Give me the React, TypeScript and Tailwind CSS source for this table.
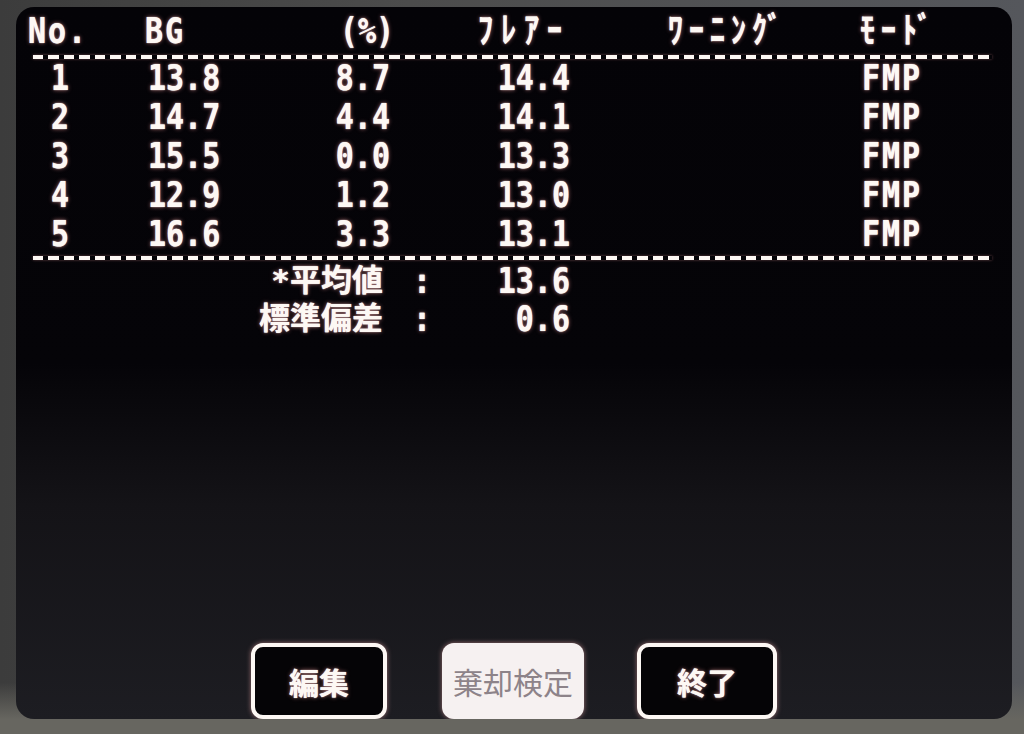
import React from "react";

const lcd =
  "inline-block scale-y-[1.2] font-['DejaVu_Sans_Mono','Noto_Sans_CJK_JP',monospace] text-[30px] font-bold leading-none text-[#fdf8f4] [text-shadow:0_0_1px_#fff,0_0_4px_rgba(255,160,160,0.6)]";
const cjk =
  "inline-block font-['DejaVu_Sans_Mono','Noto_Sans_CJK_JP',sans-serif] text-[31px] font-bold leading-none text-[#fdf8f4] [text-shadow:0_0_1px_#fff,0_0_4px_rgba(255,160,160,0.6)]";

const rows: [string, string, string, string, string][] = [
  ["1", "13.8", "8.7", "14.4", "FMP"],
  ["2", "14.7", "4.4", "14.1", "FMP"],
  ["3", "15.5", "0.0", "13.3", "FMP"],
  ["4", "12.9", "1.2", "13.0", "FMP"],
  ["5", "16.6", "3.3", "13.1", "FMP"],
];

function Dashes() {
  return (
    <div className="ml-[17px] h-[4px] w-[959px] bg-[repeating-linear-gradient(90deg,#fdf8f4_0_10px,transparent_10px_15.5px)] shadow-[0_0_3px_rgba(255,170,170,0.4)]" />
  );
}

export default function App() {
  return (
    <div className="h-[734px] w-[1024px] overflow-hidden bg-[linear-gradient(180deg,transparent_0%,transparent_93%,#676660_98%),linear-gradient(90deg,#3c3c3c_0%,#4c4c4c_40%,#55575c_100%)] pl-[16px] pt-[7px]">
      <div className="flex h-[712px] w-[996px] flex-col overflow-hidden rounded-[18px] bg-[linear-gradient(180deg,#040307_0%,#050408_50%,#141317_70%,#1d1d22_100%)]">
        {/* header */}
        <div className="flex h-[48px] items-center">
          <div className="w-[129px] pl-[12px]">
            <span className={lcd + " tracking-[2px]"}>No.</span>
          </div>
          <div className="w-[195px]">
            <span className={lcd + " tracking-[2px]"}>BG</span>
          </div>
          <div className="w-[138px]">
            <span className={lcd}>(%)</span>
          </div>
          <div className="w-[190px]">
            <span className={lcd + " tracking-[8px]"}>ﾌﾚｱｰ</span>
          </div>
          <div className="w-[192px]">
            <span className={lcd + " tracking-[6px]"}>ﾜｰﾆﾝｸﾞ</span>
          </div>
          <div>
            <span className={lcd + " tracking-[6px]"}>ﾓｰﾄﾞ</span>
          </div>
        </div>
        <Dashes />
        {/* rows */}
        <div className="flex flex-col">
          {rows.map((r) => (
            <div key={r[0]} className="flex h-[39px] items-center">
              <div className="w-[132px] pl-[35px]">
                <span className={lcd}>{r[0]}</span>
              </div>
              <div className="w-[172px]">
                <span className={lcd}>{r[1]}</span>
              </div>
              <div className="w-[70px] text-right">
                <span className={lcd}>{r[2]}</span>
              </div>
              <div className="w-[180px] text-right">
                <span className={lcd}>{r[3]}</span>
              </div>
              <div className="w-[292px]" />
              <div>
                <span className={lcd + " tracking-[2px]"}>{r[4]}</span>
              </div>
            </div>
          ))}
        </div>
        <div className="mt-[2px]">
          <Dashes />
        </div>
        {/* summary */}
        <div className="mt-[2px] flex h-[38px] items-center">
          <div className="w-[367px] text-right">
            <span className={cjk}>*平均値</span>
          </div>
          <div className="w-[30px]" />
          <div className="w-[18px]">
            <span className={lcd}>:</span>
          </div>
          <div className="w-[139px] text-right">
            <span className={lcd}>13.6</span>
          </div>
        </div>
        <div className="flex h-[38px] items-center">
          <div className="w-[367px] text-right">
            <span className={cjk}>標準偏差</span>
          </div>
          <div className="w-[30px]" />
          <div className="w-[18px]">
            <span className={lcd}>:</span>
          </div>
          <div className="w-[139px] text-right">
            <span className={lcd}>0.6</span>
          </div>
        </div>
        {/* buttons */}
        <div className="mt-auto flex justify-center">
          <div className="flex h-[76px] w-[136px] items-center justify-center rounded-[12px] border-[4px] border-[#fdf8f4] bg-[#050406] shadow-[0_0_5px_rgba(255,180,180,0.55)]">
            <span className="font-['Noto_Sans_CJK_JP',sans-serif] text-[30px] font-bold leading-none text-[#fdf8f4] [text-shadow:0_0_1px_#fff,0_0_4px_rgba(255,160,160,0.6)]">
              編集
            </span>
          </div>
          <div className="ml-[55px] flex h-[76px] w-[142px] items-center justify-center rounded-[12px] bg-[#f6f1f1] shadow-[0_0_5px_rgba(255,180,180,0.55)]">
            <span className="font-['Noto_Sans_CJK_JP',sans-serif] text-[30px] font-normal leading-none text-[#8d8389]">
              棄却検定
            </span>
          </div>
          <div className="ml-[53px] flex h-[76px] w-[140px] items-center justify-center rounded-[12px] border-[4px] border-[#fdf8f4] bg-[#050406] shadow-[0_0_5px_rgba(255,180,180,0.55)]">
            <span className="font-['Noto_Sans_CJK_JP',sans-serif] text-[30px] font-bold leading-none text-[#fdf8f4] [text-shadow:0_0_1px_#fff,0_0_4px_rgba(255,160,160,0.6)]">
              終了
            </span>
          </div>
        </div>
      </div>
    </div>
  );
}
